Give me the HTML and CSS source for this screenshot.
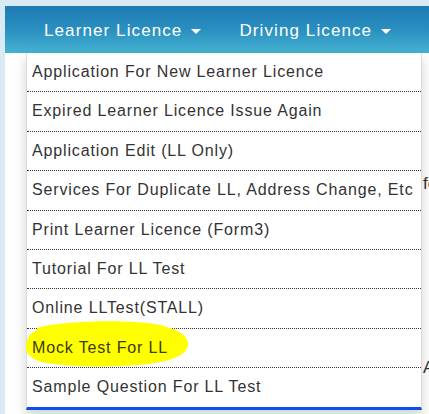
FILE: index.html
```html
<!DOCTYPE html>
<html lang="en">
<head>
<meta charset="utf-8">
<title>Sarathi - Learner Licence</title>
<link rel="stylesheet" href="styles.css">
</head>
<body>
<div class="page">
  <nav class="navbar">
    <ul class="nav">
      <li class="nav-item open">
        <span class="nav-link">Learner Licence <span class="caret"></span></span>
        <ul class="dropdown">
          <li class="dd-item">Application For New Learner Licence</li>
          <li class="dd-item">Expired Learner Licence Issue Again</li>
          <li class="dd-item">Application Edit (LL Only)</li>
          <li class="dd-item">Services For Duplicate LL, Address Change, Etc</li>
          <li class="dd-item">Print Learner Licence (Form3)</li>
          <li class="dd-item">Tutorial For LL Test</li>
          <li class="dd-item">Online LLTest(STALL)</li>
          <li class="dd-item marked">
            <svg class="highlight" viewBox="0 0 170 48" width="168" height="48" aria-hidden="true">
              <path d="M16 7 C40 1 95 -1 128 3 C150 6 166 13 167 23 C168 35 150 42 120 45 C85 48 45 47 22 43 C9 40 2 34 3 27 C3 20 6 14 12 11 Z" fill="#ffff00"/>
            </svg>
            <span class="dd-text">Mock Test For LL</span>
          </li>
          <li class="dd-item">Sample Question For LL Test</li>
        </ul>
      </li>
      <li class="nav-item">
        <span class="nav-link">Driving Licence <span class="caret"></span></span>
      </li>
      <li class="nav-item">
        <span class="nav-link">Conductor Licence <span class="caret"></span></span>
      </li>
    </ul>
  </nav>
  <main class="content">
    <p class="bg-line first">for</p>
    <p class="bg-line second">Apply</p>
  </main>
</div>
</body>
</html>
```

FILE: styles.css
```css
html, body {
  margin: 0;
  padding: 0;
}
body {
  background: #d8eaf4;
  font-family: "Liberation Sans", Arial, sans-serif;
  overflow: hidden;
  height: 414px;
}
.page {
  margin: 6px 0 0 5px;
  background: #ffffff;
  height: 408px;
  position: relative;
}
.navbar {
  height: 47px;
  background: linear-gradient(to bottom, #1e7bb4 0%, #2a8fc0 50%, #45b2d2 100%);
}
.nav {
  list-style: none;
  margin: 0;
  padding: 0 0 0 20px;
  display: flex;
  white-space: nowrap;
}
.nav-item {
  position: relative;
}
.nav-link {
  display: flex;
  align-items: center;
  height: 47px;
  padding: 3px 19px 0;
  color: #ffffff;
  font-size: 17px;
  letter-spacing: 1.1px;
  box-sizing: border-box;
}
.caret {
  display: inline-block;
  width: 0;
  height: 0;
  margin-left: 9px;
  border-top: 5px solid #ffffff;
  border-left: 5px solid transparent;
  border-right: 5px solid transparent;
}
.dropdown {
  position: absolute;
  top: 47px;
  left: 1px;
  width: 396px;
  box-sizing: border-box;
  margin: 0;
  padding: 0;
  list-style: none;
  background: #ffffff;
  border: 1px solid #dcdcdc;
  border-top: 0;
  border-bottom: 3px solid #0a4ff0;
  box-shadow: 0 6px 12px rgba(0, 0, 0, 0.18);
  z-index: 10;
}
.dd-item {
  position: relative;
  padding: 8px 5px;
  line-height: 22.4px;
  font-size: 16px;
  letter-spacing: 0.85px;
  color: #333333;
  border-bottom: 1px dotted #333333;
  white-space: nowrap;
}
.dd-item:last-child {
  border-bottom: 0;
}
.highlight {
  position: absolute;
  left: -4px;
  top: -9px;
  z-index: 1;
}
.dd-text {
  position: relative;
  z-index: 2;
  color: #3a3a10;
}
.content {
  padding: 0 0 0 418px;
}
.bg-line {
  margin: 0;
  font-size: 17px;
  line-height: 20px;
  color: #333333;
}
.bg-line.first {
  padding-top: 121px;
}
.bg-line.second {
  padding-top: 164px;
}
```
